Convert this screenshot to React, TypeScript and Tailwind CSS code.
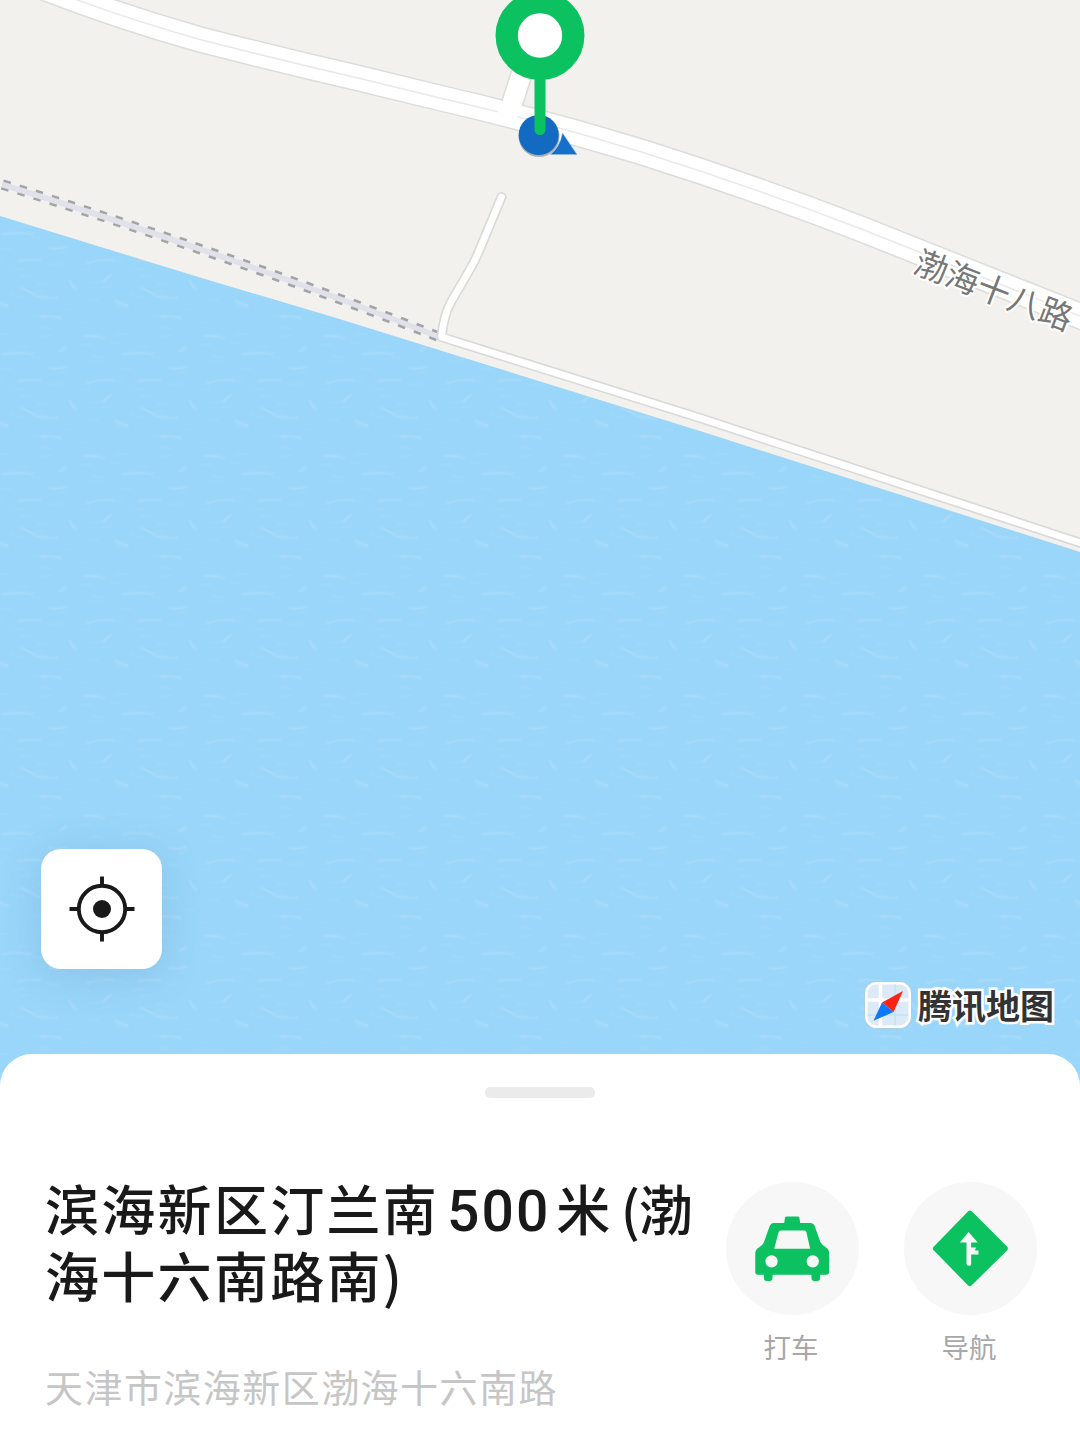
import React from "react"

const mainRoad = "M30 -18 Q110 14 200 39.5 Q280 60 360 78.5 L440 98 Q540 121 640 151.5 Q750 186 860 228.5 L1090 320"
const sideRoad = "M526 60 L511 107"
const shoreRoad = "M501.500 197 L479 251 Q475 261 469 271 L451 302 Q444 314 441.500 337 L700 418 L1090 546"
const pier = "M2.400 184.500 Q230 255 438 336.500"

// soft wave crests scattered over one water tile
const ripples = [
  "M5 16q9 -1 18 2",
  "M44 34q10 -2 28 0",
  "M100 31q3 -3 6 -4",
  "M8 63q12 -4 24 -3",
  "M58 61q12 -2 22 -1",
  "M24 81q3 -4 7 -6",
  "M61 88q8 3 16 8q9 2 20 2",
  "M82 117q9 -2 18 1",
  "M110 81q1 5 6 8",
  "M90 48q9 2 16 -1",
  "M36 101q6 3 11 5",
]
const faintRipples = Array.from({ length: 26 }, (_, i) => {
  const x = (i * 47.3 + ((i * i * 13) % 29)) % 106
  const y = 3 + ((i * 71.7 + ((i * i) % 7)) % 114)
  return `M${x.toFixed(1)} ${y.toFixed(1)}q${3 + (i % 3)} ${(i % 5) - 2} ${8 + (i % 5)} ${(i % 3) - 1}`
})

function MapCanvas() {
  return (
    <svg className="block h-full w-full" viewBox="0 0 1080 1100" fill="none">
      <defs>
        <pattern id="water" width="120" height="120" patternUnits="userSpaceOnUse" patternTransform="translate(80 80)">
          <rect width="120" height="120" fill="#99d6f9" />
          <g strokeLinecap="round">
            <path d={faintRipples.join("")} stroke="#b2dffb" strokeWidth="2.500" opacity=".18" />
            <path d={ripples.join("")} stroke="#b4dcf8" strokeWidth="4" opacity=".2" />
            <path d={ripples.join("")} stroke="#bcdcf6" strokeWidth="1.400" opacity=".28" />
          </g>
        </pattern>
      </defs>
      <rect width="1080" height="1100" fill="#f2f1ed" />
      <path d="M0 216 L200 277.500 L333 317 L460 356.500 L700 431 L1080 552 V1100 H0Z" fill="url(#water)" />

      {/* Pier */}
      <path d={pier} stroke="#a2a2a7" strokeWidth="10.500" strokeDasharray="7.5 9.3" />
      <path d={pier} stroke="#e0e1e9" strokeWidth="5.500" />

      {/* Roads */}
      <path d={shoreRoad} stroke="#d9d9d9" strokeWidth="10" strokeLinecap="round" strokeLinejoin="round" />
      <path d={mainRoad} stroke="#dcdcdb" strokeWidth="27" />
      <path d={sideRoad} stroke="#dcdcdb" strokeWidth="22.500" />
      <path d={shoreRoad} stroke="#fff" strokeWidth="6.800" strokeLinecap="round" strokeLinejoin="round" />
      <path d={mainRoad} stroke="#fff" strokeWidth="24" />
      <path d={sideRoad} stroke="#fff" strokeWidth="19.500" />
      <path d={mainRoad} stroke="#e9e9e9" strokeWidth="1.500" strokeDasharray="486 20 2000" />

      <text
        transform="translate(994 290) rotate(21)"
        x="0"
        y="12.500"
        textAnchor="middle"
        className="font-['Noto_Sans_CJK_SC',sans-serif] text-[33px]"
        letterSpacing="0.3"
        fill="#777"
        stroke="#fff"
        strokeWidth="4"
        strokeLinejoin="round"
        paintOrder="stroke"
      >
        渤海十八路
      </text>

      {/* Current position and pin */}
      <circle cx="539" cy="136.500" r="20.500" fill="#777" opacity=".55" />
      <path d="M562.500 133 L577 154.500 H550.500 Q560 147 562.500 133Z" fill="#1470c8" stroke="#8fbbe6" strokeWidth=".6" />
      <circle cx="538.700" cy="135" r="20" fill="#126bc1" />
      <path d="M540 70 V129.500" stroke="#0bc160" strokeWidth="11" strokeLinecap="round" />
      <circle cx="540" cy="35.500" r="33.300" stroke="#0bc160" strokeWidth="22.300" fill="#fff" />
    </svg>
  )
}

function MapLogo() {
  return (
    <div className="flex items-center gap-[6px]">
      <svg className="h-[48px] w-[48px]" viewBox="0 0 48 48">
        <rect x=".3" y=".3" width="47.400" height="47.400" rx="12" fill="#b2cddd" />
        <rect x="1" y="1" width="46" height="46" rx="11.500" fill="#fff" />
        <rect x="3.500" y="3.500" width="41" height="41" rx="9" fill="#dce9f7" />
        <path d="M16.500 3.500V44.500M3.500 19H44.500" stroke="#fff" strokeWidth="3.500" />
        <path d="M31 3.500V44.500M3.500 34H44.500" stroke="#b5e1ef" strokeWidth="1" />
        <path d="M39 10 L18 21.500 L29.500 31Z" fill="#fa2414" />
        <path d="M18 21.500 L29.500 31 L9.500 39.800Z" fill="#0e78fa" />
      </svg>
      <span className="relative font-['Noto_Sans_CJK_SC',sans-serif] text-[34px] font-bold leading-[48px] text-[#333] [paint-order:stroke] [-webkit-text-stroke:5px_white]">
        腾讯地图
      </span>
    </div>
  )
}

function TaxiIcon() {
  return (
    <svg className="h-[133px] w-[133px]" viewBox="0 0 400 400">
      <path
        fill="#0bc160"
        fillRule="evenodd"
        d="M182 104H216Q221 104 221 109L223 123H255Q263 123 266 131L284 181Q290 191 302 198Q310 203 310 215V270Q310 279 301 279H283V289Q283 298 274 298H266Q257 298 257 289V279H140V289Q140 298 131 298H123Q114 298 114 289V279H96Q88 279 88 271V215Q88 204 98 198Q110 191 114 181L132 131Q135 123 143 123H175L177 109Q177 104 182 104ZM164 146Q160 146 158 151L145 201H253L242 151Q241 146 236 146ZM137 220A18.500 18.500 0 1 0 137 257A18.500 18.500 0 1 0 137 220ZM261 220A18.500 18.500 0 1 0 261 257A18.500 18.500 0 1 0 261 220Z"
      />
    </svg>
  )
}

function NavigationIcon() {
  return (
    <svg className="h-[133px] w-[133px]" viewBox="0 0 400 400">
      <path d="M198 94L304 200L198 305L95 200Z" fill="#0bc160" stroke="#0bc160" strokeWidth="16" strokeLinejoin="round" />
      <path
        d="M194 150L222 182H202V197H217L213 206H224V218H202V247Q202 252 195 252Q188 252 188 245V182H168Z"
        fill="#f8f8f8"
      />
    </svg>
  )
}

function ActionButton({ label, children }: { label: string; children: React.ReactNode }) {
  return (
    <button className="flex flex-col items-center">
      <span className="h-[133px] w-[133px] rounded-full bg-[#f7f7f7]">{children}</span>
      <span className="mr-[3px] mt-[11px] text-[27.500px] leading-[40px] text-[#a8a8a8]">{label}</span>
    </button>
  )
}

export default function App() {
  return (
    <div className="flex h-[1440px] w-[1080px] flex-col overflow-hidden bg-white font-['Noto_Sans_CJK_SC',sans-serif]">
      <div className="relative h-[1100px] shrink-0">
        <MapCanvas />
        <div className="absolute inset-x-0 bottom-0 flex items-end justify-between pb-[71px] pl-[41px] pr-[26px]">
          <button className="mb-[60px] flex h-[120px] w-[121px] items-center justify-center rounded-[20px] bg-white shadow-[0_6px_40px_rgba(60,110,150,0.18)]">
            <svg className="h-[66px] w-[66px]" viewBox="0 0 66 66" fill="none" stroke="#191919" strokeWidth="3.900">
              <circle cx="33" cy="33" r="23.200" />
              <path d="M33 0.500V11M33 55V65.500M0.500 33H11M55 33H65.500" />
              <circle cx="33" cy="33" r="9" fill="#191919" stroke="none" />
            </svg>
          </button>
          <MapLogo />
        </div>
      </div>

      {/* Place sheet */}
      <div className="relative -mt-[46px] flex h-[386px] shrink-0 flex-col rounded-t-[32px] bg-white">
        <div className="mx-auto mt-[33px] h-[11px] w-[110px] shrink-0 rounded-[5px] bg-[#ebebeb]" />
        <div className="mt-[84px] flex justify-between pl-[45px] pr-[43px]">
          <div className="-mt-[7px]">
            <h1 className="whitespace-nowrap text-[54px] font-medium leading-[66px] tracking-[2.300px] text-[#191919]">
              滨海新区汀兰南
              <span className="ml-[8px] mr-[6px] font-['Roboto'] text-[57px] leading-[60px] tracking-[2px]">500</span>
              米<span className="ml-[8px] tracking-[-1px]">(</span>渤
              <br />
              海十六南路南)
            </h1>
            <p className="mt-[50px] whitespace-nowrap text-[38px] leading-[56px] tracking-[1.450px] text-[#c6c6c6]">
              天津市滨海新区渤海十六南路
            </p>
          </div>
          <div className="flex items-start gap-[45px]">
            <ActionButton label="打车">
              <TaxiIcon />
            </ActionButton>
            <ActionButton label="导航">
              <NavigationIcon />
            </ActionButton>
          </div>
        </div>
      </div>
    </div>
  )
}
